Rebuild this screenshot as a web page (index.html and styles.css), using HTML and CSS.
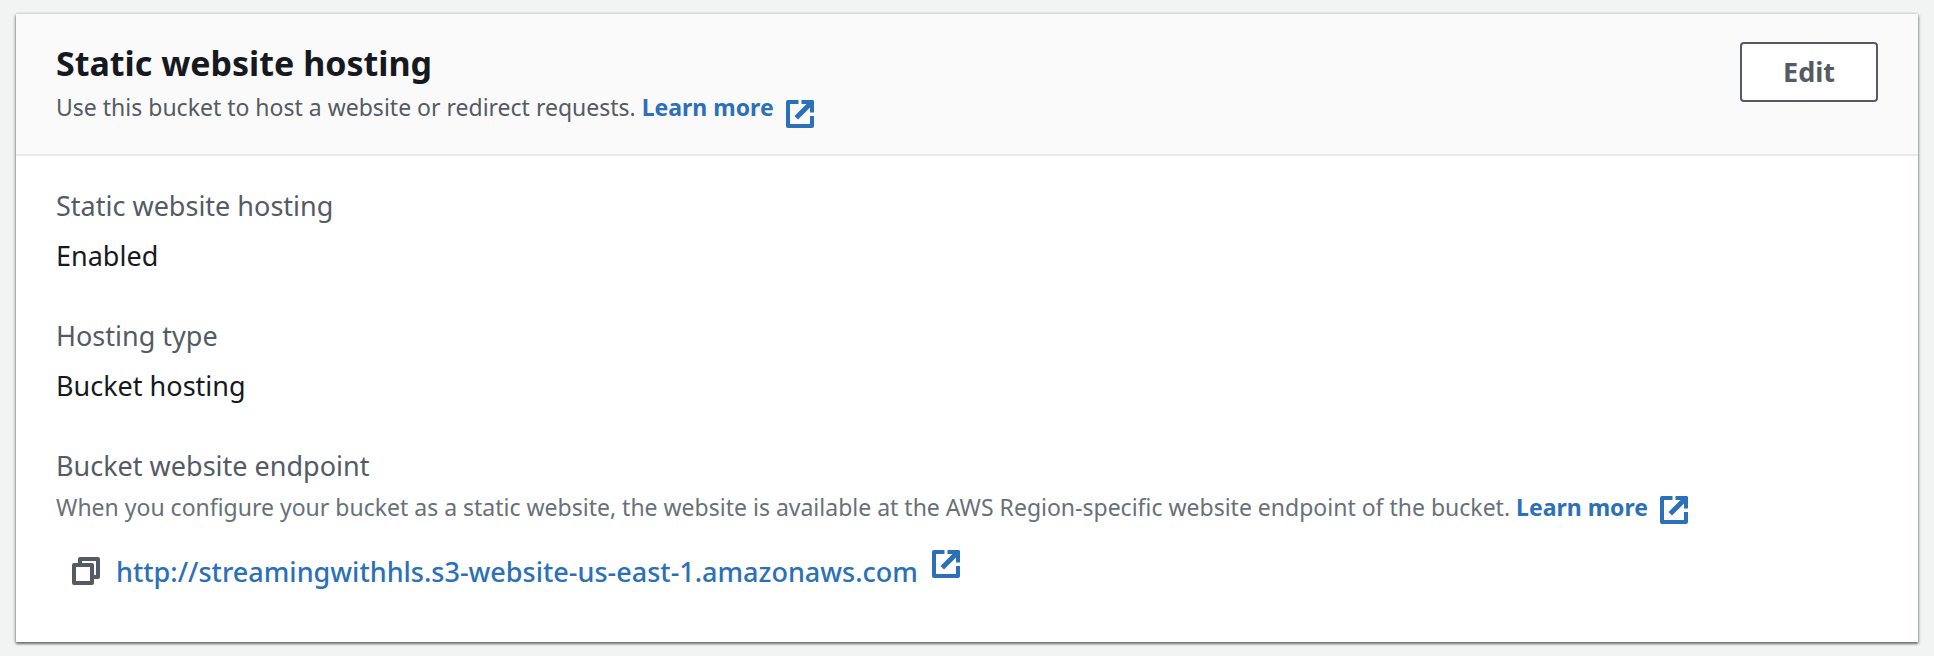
FILE: index.html
```html
<!DOCTYPE html>
<html lang="en">
<head>
<meta charset="utf-8">
<title>Static website hosting</title>
<link rel="stylesheet" href="styles.css">
</head>
<body>
<svg class="sprite" aria-hidden="true">
  <symbol id="external" viewBox="0 0 28 28">
    <path d="M12.5 2H2v24h24V16" fill="none" stroke="currentColor" stroke-width="4" stroke-linejoin="round"/>
    <path d="M15.5 0H27l1 1v11.500h-4V7.500L12 19.500l-3.500-3.500L20.500 4h-5z" fill="currentColor"/>
  </symbol>
  <symbol id="copy" viewBox="0 0 28 28">
    <g fill="none" stroke="currentColor" stroke-width="4" stroke-linejoin="round"><path d="M2 8h18v18H2z"/><path d="M8 6V2h18v18h-4"/></g>
  </symbol>
</svg>
<main class="card">
  <header class="card-header">
    <div class="heading">
      <h2 class="title">Static website hosting</h2>
      <p class="description">Use this bucket to host a website or redirect requests. <a class="learn" href="#">Learn more<svg class="icon icon-low" aria-hidden="true"><use href="#external"/></svg></a></p>
    </div>
    <button class="edit" type="button">Edit</button>
  </header>
  <dl class="details">
    <div class="field">
      <dt class="label">Static website hosting</dt>
      <dd class="value">Enabled</dd>
    </div>
    <div class="field">
      <dt class="label">Hosting type</dt>
      <dd class="value">Bucket hosting</dd>
    </div>
    <div class="field">
      <dt class="label">Bucket website endpoint</dt>
      <dd class="hint">When you configure your bucket as a static website, the website is available at the AWS Region-specific website endpoint of the bucket. <a class="learn" href="#">Learn more<svg class="icon" aria-hidden="true"><use href="#external"/></svg></a></dd>
      <dd class="endpoint">
        <button class="copy" type="button" aria-label="Copy endpoint"><svg class="copy-icon" aria-hidden="true"><use href="#copy"/></svg></button>
        <a class="url" href="#">http://streamingwithhls.s3-website-us-east-1.amazonaws.com<svg class="icon icon-high" aria-hidden="true"><use href="#external"/></svg></a>
      </dd>
    </div>
  </dl>
</main>
</body>
</html>
```
FILE: styles.css
```css
* { box-sizing: border-box; }
body {
  margin: 0;
  padding: 14px 16px;
  background: #f2f3f3;
  color: #16191f;
  font-family: "Noto Sans", sans-serif;
  font-size: 27px;
  font-weight: 400;
  line-height: 40px;
}
.sprite { position: absolute; width: 0; height: 0; }
.card {
  background: #fff;
  box-shadow: 0 2px 2px rgba(0, 28, 36, 0.4), 1px 1px 3px rgba(0, 28, 36, 0.25), -1px 1px 3px rgba(0, 28, 36, 0.25), 0 -2px 0 #eaeded;
}
.card-header {
  display: flex;
  justify-content: space-between;
  align-items: flex-start;
  padding: 28px 40px 24px;
  background: #fafafa;
  border-bottom: 2px solid #eaeaea;
}
.title { margin: 0; font-size: 34px; line-height: 42px; font-weight: 700; }
.description { margin: 0; color: #545b64; font-size: 23px; line-height: 46px; }
.hint { margin: 0; color: #687078; font-size: 23px; line-height: 42px; }
a { color: #2b70b8; text-decoration: none; }
.learn { font-weight: 700; }
.url { font-weight: 500; }
.icon { width: 28px; height: 28px; margin-left: 12px; vertical-align: -8px; }
.icon-low { vertical-align: -12px; }
.icon-high { vertical-align: 4px; margin-left: 14px; }
.edit {
  padding: 8px 41px;
  background: #fff;
  border: 2px solid #545b64;
  border-radius: 4px;
  color: #545b64;
  font: 700 27px/40px "Noto Sans", sans-serif;
}
.details { display: flex; flex-direction: column; gap: 40px; margin: 0; padding: 30px 40px 50px; }
.label { color: #545b64; }
.value { margin: 10px 0 0; }
.endpoint { display: flex; align-items: center; gap: 16px; margin: 22px 0 0; padding-left: 16px; }
.copy { display: flex; padding: 0; border: 0; background: none; color: #545b64; }
.copy-icon { width: 28px; height: 28px; }
```
